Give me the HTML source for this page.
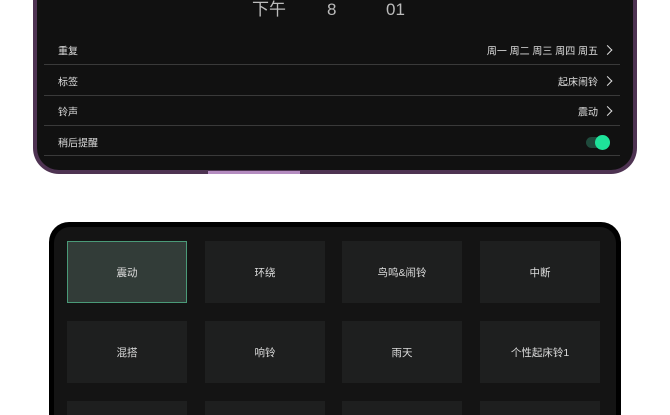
<!DOCTYPE html>
<html><head><meta charset="utf-8"><style>
html,body{margin:0;padding:0;width:670px;height:415px;overflow:hidden;background:#fff}
#w{position:relative;width:670px;height:415px;overflow:hidden;font-family:"Liberation Sans","Noto Sans CJK SC",sans-serif;}
.p1{position:absolute;left:33px;top:0;width:604px;height:174px;background:#4e3352;border-radius:0 0 26px 26px;}
.s1{position:absolute;left:37px;top:0;width:596px;height:170px;background:#111;border-radius:0 0 22px 22px;}
.time{position:absolute;top:0;font-size:17px;color:#bbb;line-height:20px}
.row{position:absolute;left:58px;width:556px;height:30px;color:#ddd;font-size:10px;}
.row .l{position:absolute;left:0;top:50%;transform:translateY(-50%)}
.row .r{position:absolute;right:0;top:50%;transform:translateY(-50%)}
.sep{position:absolute;left:44px;width:576px;height:1px;background:#3a3a3a}
.chev{display:inline-block;width:6px;height:6px;border-right:1.5px solid #ddd;border-top:1.5px solid #ddd;transform:rotate(45deg);margin-left:6px;margin-right:3px;vertical-align:1px}
.p2{position:absolute;left:49px;top:222px;width:572px;height:193px;background:#000;border-radius:20px 20px 0 0;}
.s2{position:absolute;left:54px;top:227px;width:562px;height:188px;background:#141414;border-radius:16px 16px 0 0;}
.t{position:absolute;width:120px;height:62px;background:#1e1f1f;color:#ddd;font-size:10.5px;display:flex;align-items:center;justify-content:center}
.sel{background:#323c38;border:1px solid #4a9a78;box-sizing:border-box}
</style></head><body><div id="w">
<div class="p1"></div><div class="s1"></div>
<div style="position:absolute;left:208px;top:171px;width:92px;height:3px;background:#b48cc0"></div>
<div class="time" style="left:252px">下午</div>
<div class="time" style="left:327px">8</div>
<div class="time" style="left:386px">01</div>
<div class="row" style="top:35px"><span class="l">重复</span><span class="r">周一 周二 周三 周四 周五<i class="chev"></i></span></div>
<div class="sep" style="top:64px"></div>
<div class="row" style="top:66px"><span class="l">标签</span><span class="r">起床闹铃<i class="chev"></i></span></div>
<div class="sep" style="top:95px"></div>
<div class="row" style="top:96px"><span class="l">铃声</span><span class="r">震动<i class="chev"></i></span></div>
<div class="sep" style="top:125px"></div>
<div class="row" style="top:127px"><span class="l">稍后提醒</span></div>
<div style="position:absolute;left:586px;top:137px;width:24px;height:11px;border-radius:6px;background:#1f4a3c"></div>
<div style="position:absolute;left:595px;top:135px;width:15px;height:15px;border-radius:50%;background:#1ee39a"></div>
<div class="sep" style="top:155px"></div>
<div class="p2"></div><div class="s2"></div>
<div class="t sel" style="left:67px;top:241px">震动</div>
<div class="t" style="left:205px;top:241px">环绕</div>
<div class="t" style="left:342px;top:241px">鸟鸣&amp;闹铃</div>
<div class="t" style="left:480px;top:241px">中断</div>
<div class="t" style="left:67px;top:321px">混搭</div>
<div class="t" style="left:205px;top:321px">响铃</div>
<div class="t" style="left:342px;top:321px">雨天</div>
<div class="t" style="left:480px;top:321px">个性起床铃1</div>
<div class="t" style="left:67px;top:401px;height:14px"></div>
<div class="t" style="left:205px;top:401px;height:14px"></div>
<div class="t" style="left:342px;top:401px;height:14px"></div>
<div class="t" style="left:480px;top:401px;height:14px"></div>
</div></body></html>
